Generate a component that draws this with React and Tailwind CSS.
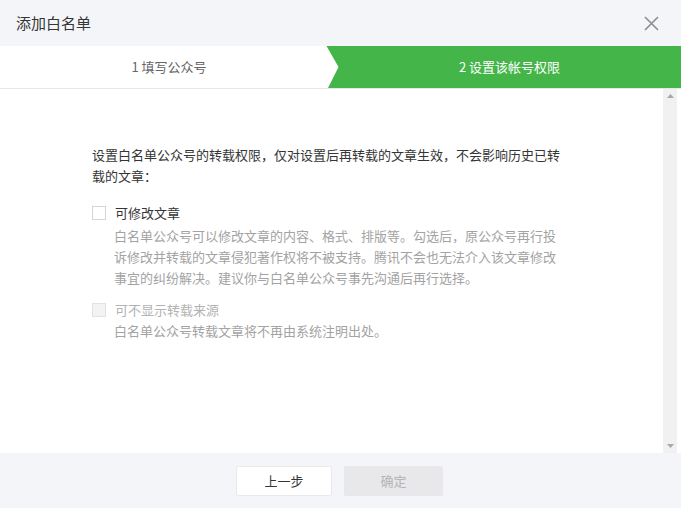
import React, { useState } from 'react';

const font = { fontFamily: '"Noto Sans CJK SC", "Noto Sans", sans-serif' };

const Checkbox = ({ checked, disabled, onChange }) => (
  <button
    type="button"
    disabled={disabled}
    onClick={onChange}
    className={`w-[14px] h-[14px] border shrink-0 flex items-center justify-center ${
      disabled ? 'bg-[#f3f3f3] border-[#e2e2e2]' : 'bg-white border-[#d6d6d6]'
    }`}
  >
    {checked && (
      <svg width="10" height="10" viewBox="0 0 10 10">
        <path d="M1.5 5 L4 7.5 L8.5 2.5" fill="none" stroke="#44b549" strokeWidth="1.5" />
      </svg>
    )}
  </button>
);

const App = () => {
  const [canEdit, setCanEdit] = useState(false);

  return (
    <div className="w-[681px] h-[508px] flex flex-col bg-white text-[13px]" style={font}>
      {/* Header */}
      <div className="h-[46px] shrink-0 bg-[#f4f5f9] flex items-center justify-between pl-[16px] pr-[22px]">
        <h3 className="text-[15px] text-[#353535]">添加白名单</h3>
        <button type="button" className="w-[16px] h-[16px] flex items-center justify-center">
          <svg width="15" height="15" viewBox="0 0 15 15">
            <path d="M1 1 L14 14 M14 1 L1 14" stroke="#8d8d8d" strokeWidth="1.6" />
          </svg>
        </button>
      </div>

      {/* Steps */}
      <div className="h-[43px] shrink-0 flex border-b border-[#e4e8eb] relative">
        <div className="w-[338px] shrink-0 flex items-center justify-center text-[#666]">1 填写公众号</div>
        <div className="flex-1 -ml-[12px] pl-[12px] bg-[#44b549] flex items-center justify-center text-white">
          2 设置该帐号权限
        </div>
        <svg className="absolute left-[326px] top-0" width="13" height="42" viewBox="0 0 13 42">
          <path d="M0 0 L0.5 0 L12.5 21 L2 42 L0 42 Z" fill="#ffffff" />
        </svg>
      </div>

      {/* Body */}
      <div className="flex-1 flex min-h-0">
        <div className="flex-1 pt-[55px] pl-[92px]">
          <p className="w-[472px] leading-[21px] text-[#353535]">
            设置白名单公众号的转载权限，仅对设置后再转载的文章生效，不会影响历史已转载的文章：
          </p>

          <div className="mt-[16px]">
            <label className="flex items-center gap-[9px] h-[21px] cursor-pointer">
              <Checkbox checked={canEdit} onChange={() => setCanEdit(!canEdit)} />
              <span className="text-[#353535]">可修改文章</span>
            </label>
            <p className="ml-[22px] mt-[2px] w-[445px] leading-[21px] text-[#a3a3a3]">
              白名单公众号可以修改文章的内容、格式、排版等。勾选后，原公众号再行投诉修改并转载的文章侵犯著作权将不被支持。腾讯不会也无法介入该文章修改事宜的纠纷解决。建议你与白名单公众号事先沟通后再行选择。
            </p>
          </div>

          <div className="mt-[11px]">
            <label className="flex items-center gap-[9px] h-[21px]">
              <Checkbox disabled />
              <span className="text-[#b2b2b2]">可不显示转载来源</span>
            </label>
            <p className="ml-[22px] w-[445px] leading-[21px] text-[#a3a3a3]">
              白名单公众号转载文章将不再由系统注明出处。
            </p>
          </div>
        </div>

        {/* Scrollbar */}
        <div className="w-[14px] mr-[4px] bg-[#f1f1f1] flex flex-col items-center justify-between py-[5px]">
          <svg width="7" height="4" viewBox="0 0 7 4">
            <path d="M0 4 L3.5 0 L7 4 Z" fill="#a8a8a8" />
          </svg>
          <svg width="7" height="4" viewBox="0 0 7 4">
            <path d="M0 0 L3.5 4 L7 0 Z" fill="#a8a8a8" />
          </svg>
        </div>
      </div>

      {/* Footer */}
      <div className="h-[55px] shrink-0 bg-[#f4f5f9] flex items-center justify-center gap-[12px] pr-[2px]">
        <button type="button" className="w-[96px] h-[30px] bg-white border border-[#eaeaea] text-[#353535] rounded-[2px]">
          上一步
        </button>
        <button type="button" disabled className="w-[99px] h-[30px] bg-[#e8e8eb] text-[#b4b4b4] rounded-[2px]">
          确定
        </button>
      </div>
    </div>
  );
};

export default App;
